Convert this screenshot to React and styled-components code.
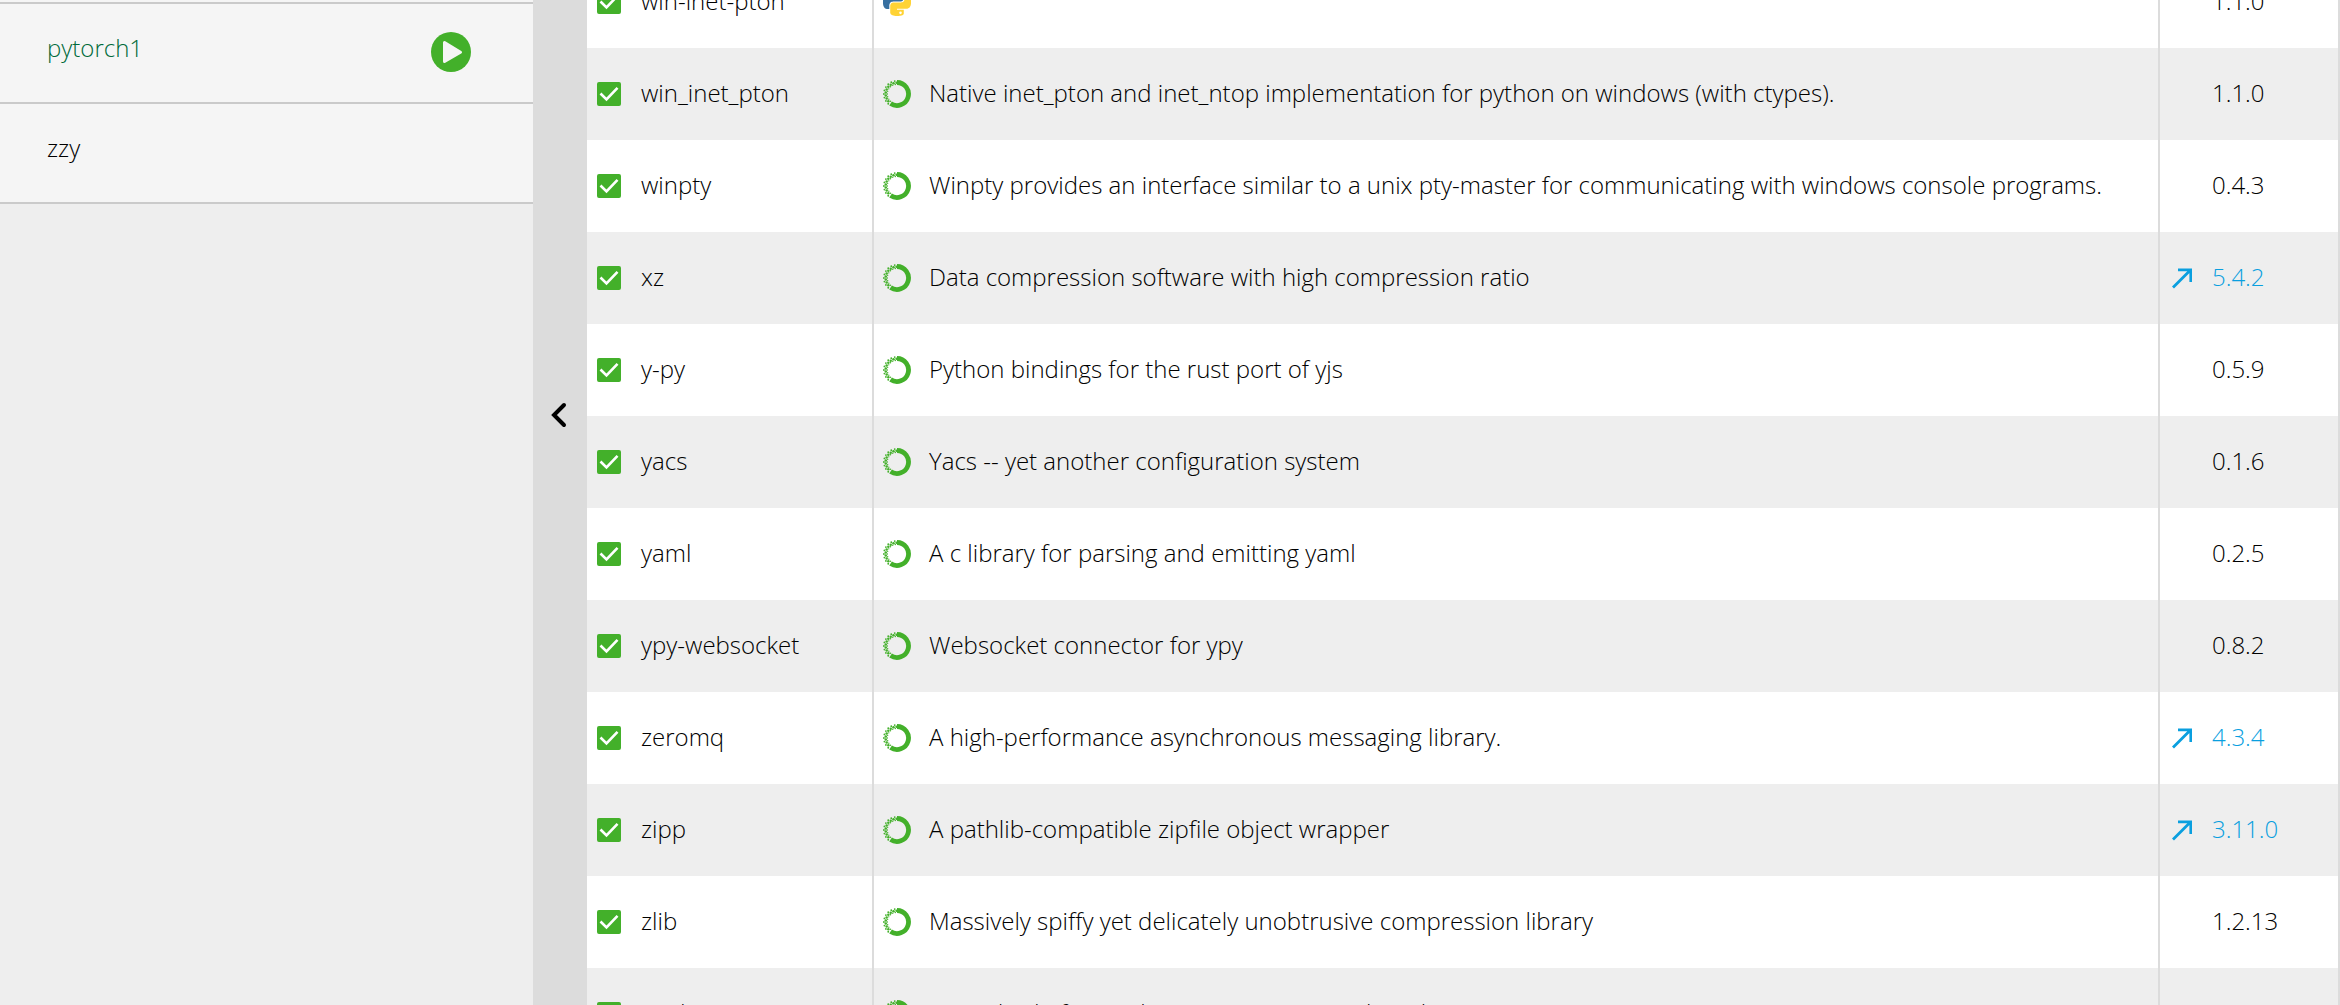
import React from "react";
import styled, { createGlobalStyle } from "styled-components";

const GlobalStyle = createGlobalStyle`
  * { box-sizing: border-box; }
  body {
    margin: 0;
    background: #fff;
    color: #000;
    font-family: "Open Sans", "Noto Sans", sans-serif;
    font-size: 24px;
    font-weight: 300;
    line-height: 32px;
  }
`;

const Page = styled.div`
  display: flex;
  height: 100vh;
  overflow: hidden;
`;

const Sidebar = styled.nav`
  flex: 0 0 533px;
  overflow: hidden;
  background: #eeeeee;
`;

const EnvironmentList = styled.ul`
  margin: -96px 0 0;
  padding: 0;
  list-style: none;
`;

const Environment = styled.li`
  display: flex;
  align-items: center;
  justify-content: space-between;
  height: 100px;
  padding: 0 62px 2px 47px;
  background: #f5f5f5;
  border-bottom: 2px solid #cacaca;
`;

const PlainButton = styled.button`
  display: flex;
  padding: 0;
  border: 0;
  background: none;
  color: inherit;
  font: inherit;
  cursor: pointer;
`;

const EnvironmentName = styled(PlainButton)`
  padding-bottom: 8px;
  color: ${(p) => (p.$active ? "#006a3a" : "#000")};
`;

const Splitter = styled.div`
  flex: 0 0 54px;
  display: flex;
  align-items: flex-start;
  justify-content: center;
  padding: 399px 2px 0 0;
  background: #dcdcdc;
`;

const PackagePanel = styled.main`
  flex: 1;
  min-width: 0;
  overflow: hidden;
`;

const PackageTable = styled.table`
  width: 100%;
  margin-top: -44px;
  border-collapse: separate;
  border-spacing: 0;
  table-layout: fixed;
`;

const Column = styled.col`
  width: ${(p) => p.$width};
`;

const PackageRow = styled.tr`
  background: #fff;
  &:nth-child(even) { background: #eeeeee; }
`;

const Cell = styled.td`
  height: 92px;
  padding: 0 0 0 ${(p) => p.$inset};
  border-right: 2px solid #dcdcdc;
  white-space: nowrap;
`;

const CellContent = styled.div`
  display: flex;
  align-items: center;
  gap: ${(p) => p.$gap};
`;

const PackageLabel = styled.label`
  display: flex;
  align-items: center;
  gap: 20px;
`;

const CellText = styled.span`
  padding-bottom: 2px;
  color: ${(p) => (p.$upgradable ? "#0a9fdf" : "#000")};
`;

const CheckFrame = styled.span`
  display: grid;
  width: 24px;
  height: 24px;
  > * { grid-area: 1 / 1; }
  svg { pointer-events: none; }
`;

const CheckBox = styled.input`
  appearance: none;
  width: 24px;
  height: 24px;
  margin: 0;
  border: 2px solid #43b02a;
  border-radius: 2px;
  &:checked { background: #43b02a; }
  &:not(:checked) + svg { visibility: hidden; }
`;

const Icon = styled.svg`
  display: block;
  flex: none;
`;

const UpdateSlot = styled.span`
  flex: 0 0 20px;
`;

const GREEN = "#43b02a";

function point(radius, degrees) {
  const a = (degrees * Math.PI) / 180;
  return [14 + radius * Math.sin(a), 14 - radius * Math.cos(a)];
}

function buildSpecks() {
  const specks = [];
  [
    [13.1, 0, 0.9],
    [11.3, 8, 1.25],
    [9.7, 0, 0.7],
  ].forEach(([radius, shift, size]) => {
    for (let d = 222; d < 352; d += 16) {
      const [cx, cy] = point(radius, d + shift);
      specks.push({ cx, cy, r: size });
    }
  });
  return specks;
}

const SPECKS = buildSpecks();
const [ARC_X, ARC_Y] = point(11.5, 214);

function CondaIcon() {
  return (
    <Icon width="28" height="28" viewBox="0 0 28 28" role="img" aria-label="conda">
      <path
        d={`M14 2.5A11.5 11.5 0 1 1 ${ARC_X} ${ARC_Y}`}
        fill="none"
        stroke={GREEN}
        strokeWidth="4.8"
      />
      <g fill={GREEN}>
        {SPECKS.map((s, i) => (
          <circle key={i} {...s} />
        ))}
      </g>
    </Icon>
  );
}

function PythonIcon() {
  return (
    <Icon width="28" height="28" viewBox="0 0 24 24" role="img" aria-label="pip">
      <path
        fill="#366fa0"
        d="M14.25.18l.9.2.73.26.59.3.45.32.34.34.25.34.16.33.1.3.04.26.02.2-.01.13V8.5l-.05.63-.13.55-.21.46-.26.38-.3.31-.33.25-.35.19-.35.14-.33.1-.3.07-.26.04-.21.02H8.77l-.69.05-.59.14-.5.22-.41.27-.33.32-.27.35-.2.36-.15.37-.1.35-.07.32-.04.27-.02.21v3.06H3.17l-.21-.03-.28-.07-.32-.12-.35-.18-.36-.26-.36-.36-.35-.46-.32-.59-.28-.73-.21-.88-.14-1.05-.05-1.23.06-1.22.16-1.04.24-.87.32-.71.36-.57.4-.44.42-.33.42-.24.4-.16.36-.1.32-.05.24-.01h.16l.06.01h8.16v-.83H6.18l-.01-2.75-.02-.37.05-.34.11-.31.17-.28.25-.26.31-.23.38-.2.44-.18.51-.15.58-.12.64-.1.71-.06.77-.04.84-.02 1.27.05z"
      />
      <path
        fill="#ffd335"
        d="M21.04 6.11l.28.06.32.12.35.18.36.27.36.35.35.47.32.59.28.73.21.88.14 1.04.05 1.23-.06 1.23-.16 1.04-.24.86-.32.71-.36.57-.4.45-.42.33-.42.24-.4.16-.36.09-.32.05-.24.02-.16-.01h-8.22v.82h5.84l.01 2.76.02.36-.05.34-.11.31-.17.29-.25.25-.31.24-.38.2-.44.17-.51.15-.58.13-.64.09-.71.07-.77.04-.84.01-1.27-.04-1.07-.14-.9-.2-.73-.25-.59-.3-.45-.33-.34-.34-.25-.34-.16-.33-.1-.3-.04-.25-.02-.2.01-.13v-5.34l.05-.64.13-.54.21-.46.26-.38.3-.32.33-.24.35-.2.35-.14.33-.1.3-.06.26-.04.21-.02.13-.01h5.84l.69-.05.59-.14.5-.21.41-.28.33-.32.27-.35.2-.36.15-.36.1-.35.07-.32.04-.28.02-.21V6.07h2.09l.14.01z"
      />
      <circle cx="15" cy="21.3" r="1.1" fill="#fff" />
    </Icon>
  );
}

function PlayIcon() {
  return (
    <Icon width="40" height="40" viewBox="0 0 40 40" aria-hidden="true">
      <circle cx="20" cy="20" r="20" fill={GREEN} />
      <path
        d="M13.5 10.5V29.5L29.5 20.2Z"
        fill="#f5f5f5"
        stroke="#f5f5f5"
        strokeWidth="3"
        strokeLinejoin="round"
      />
    </Icon>
  );
}

function UpdateIcon() {
  return (
    <Icon width="20" height="22" viewBox="0 0 20 22" role="img" aria-label="Update available">
      <path
        d="M1 20.5L18.5 3M6 2.8H18.8V15"
        fill="none"
        stroke="#0a9fdf"
        strokeWidth="2.8"
      />
    </Icon>
  );
}

const PACKAGES = [
  { name: "win-inet-pton", about: "", version: "1.1.0", pip: true },
  { name: "win_inet_pton", about: "Native inet_pton and inet_ntop implementation for python on windows (with ctypes).", version: "1.1.0" },
  { name: "winpty", about: "Winpty provides an interface similar to a unix pty-master for communicating with windows console programs.", version: "0.4.3" },
  { name: "xz", about: "Data compression software with high compression ratio", version: "5.4.2", upgradable: true },
  { name: "y-py", about: "Python bindings for the rust port of yjs", version: "0.5.9" },
  { name: "yacs", about: "Yacs -- yet another configuration system", version: "0.1.6" },
  { name: "yaml", about: "A c library for parsing and emitting yaml", version: "0.2.5" },
  { name: "ypy-websocket", about: "Websocket connector for ypy", version: "0.8.2" },
  { name: "zeromq", about: "A high-performance asynchronous messaging library.", version: "4.3.4", upgradable: true },
  { name: "zipp", about: "A pathlib-compatible zipfile object wrapper", version: "3.11.0", upgradable: true },
  { name: "zlib", about: "Massively spiffy yet delicately unobtrusive compression library", version: "1.2.13" },
  { name: "zstd", about: "Zstandard - fast real-time compression algorithm", version: "" },
];

function Package({ name, about, version, pip, upgradable }) {
  return (
    <PackageRow>
      <Cell $inset="10px">
        <PackageLabel>
          <CheckFrame>
            <CheckBox type="checkbox" defaultChecked />
            <Icon width="24" height="24" viewBox="0 0 24 24" aria-hidden="true">
              <path d="M3.5 11.5L9.5 17.5L20.5 5.8" fill="none" stroke="#fff" strokeWidth="2.6" />
            </Icon>
          </CheckFrame>
          <CellText>{name}</CellText>
        </PackageLabel>
      </Cell>
      <Cell $inset="9px">
        <CellContent $gap="18px">
          {pip ? <PythonIcon /> : <CondaIcon />}
          <CellText>{about}</CellText>
        </CellContent>
      </Cell>
      <Cell $inset="12px">
        <CellContent $gap="20px">
          <UpdateSlot>{upgradable && <UpdateIcon />}</UpdateSlot>
          <CellText $upgradable={upgradable}>{version}</CellText>
        </CellContent>
      </Cell>
    </PackageRow>
  );
}

export default function App() {
  return (
    <>
      <GlobalStyle />
      <Page>
        <Sidebar aria-label="Environments">
          <EnvironmentList>
            <Environment />
            <Environment>
              <EnvironmentName $active>pytorch1</EnvironmentName>
              <PlainButton aria-label="Run pytorch1">
                <PlayIcon />
              </PlainButton>
            </Environment>
            <Environment>
              <EnvironmentName>zzy</EnvironmentName>
            </Environment>
          </EnvironmentList>
        </Sidebar>
        <Splitter>
          <PlainButton aria-label="Collapse environments">
            <Icon width="20" height="32" viewBox="0 0 20 32" aria-hidden="true">
              <path
                d="M15 6L5 16L15 26"
                fill="none"
                stroke="#000"
                strokeWidth="4"
                strokeLinecap="round"
              />
            </Icon>
          </PlainButton>
        </Splitter>
        <PackagePanel>
          <PackageTable>
            <colgroup>
              <Column $width="287px" />
              <Column $width="auto" />
              <Column $width="180px" />
            </colgroup>
            <tbody>
              {PACKAGES.map((p) => (
                <Package key={p.name} {...p} />
              ))}
            </tbody>
          </PackageTable>
        </PackagePanel>
      </Page>
    </>
  );
}
